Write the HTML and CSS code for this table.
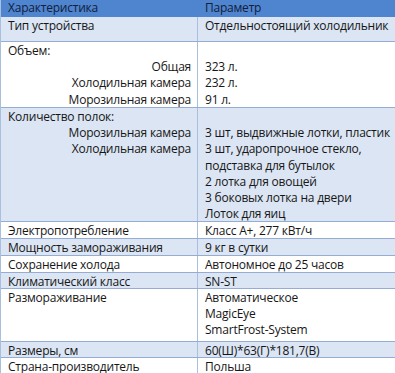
FILE: index.html
```html
<!DOCTYPE html>
<html lang="ru">
<head>
<meta charset="utf-8">
<link rel="stylesheet" href="styles.css">
</head>
<body>
<div class="table">
  <div class="row head h17">
    <div class="cell">Характеристика</div>
    <div class="cell val">Параметр</div>
  </div>
  <div class="row blue h25">
    <div class="cell">Тип устройства</div>
    <div class="cell val">Отдельностоящий холодильник</div>
  </div>
  <div class="row white h66">
    <div class="cell">
      <div class="line">Объем:</div>
      <div class="line sub">Общая</div>
      <div class="line sub">Холодильная камера</div>
      <div class="line sub">Морозильная камера</div>
    </div>
    <div class="cell val">
      <div class="line">&nbsp;</div>
      <div class="line">323 л.</div>
      <div class="line">232 л.</div>
      <div class="line">91 л.</div>
    </div>
  </div>
  <div class="row blue h114">
    <div class="cell">
      <div class="line">Количество полок:</div>
      <div class="line sub">Морозильная камера</div>
      <div class="line sub">Холодильная камера</div>
    </div>
    <div class="cell val">
      <div class="line">&nbsp;</div>
      <div class="line">3 шт, выдвижные лотки, пластик</div>
      <div class="line">3 шт, ударопрочное стекло,</div>
      <div class="line">подставка для бутылок</div>
      <div class="line">2 лотка для овощей</div>
      <div class="line">3 боковых лотка на двери</div>
      <div class="line">Лоток для яиц</div>
    </div>
  </div>
  <div class="row white h17">
    <div class="cell">Электропотребление</div>
    <div class="cell val">Класс А+, 277 кВт/ч</div>
  </div>
  <div class="row blue h17">
    <div class="cell">Мощность замораживания</div>
    <div class="cell val">9 кг в сутки</div>
  </div>
  <div class="row white h17">
    <div class="cell">Сохранение холода</div>
    <div class="cell val">Автономное до 25 часов</div>
  </div>
  <div class="row blue h16">
    <div class="cell">Климатический класс</div>
    <div class="cell val">SN-ST</div>
  </div>
  <div class="row white h53">
    <div class="cell">Размораживание</div>
    <div class="cell val">
      <div class="line">Автоматическое</div>
      <div class="line">MagicEye</div>
      <div class="line">SmartFrost-System</div>
    </div>
  </div>
  <div class="row blue h16">
    <div class="cell">Размеры, см</div>
    <div class="cell val">60(Ш)*63(Г)*181,7(В)</div>
  </div>
  <div class="row white h17">
    <div class="cell">Страна-производитель</div>
    <div class="cell val">Польша</div>
  </div>
</div>
</body>
</html>
```

FILE: styles.css
```css
html, body {
  margin: 0;
  padding: 0;
  background: #ffffff;
}
body {
  font-family: "Open Sans", "Noto Sans", sans-serif;
  font-size: 12px;
  letter-spacing: -0.22px;
  color: #161616;
  overflow: hidden;
}
.table {
  width: 398px;
  border-left: 1px solid #a9bfde;
}
.row {
  display: grid;
  grid-template-columns: 196px 1fr;
  box-sizing: border-box;
  border-bottom: 1px solid #95add3;
  line-height: 16px;
}
.cell {
  padding: 1px 6px 0 7px;
  white-space: nowrap;
  min-height: 0;
}
.line {
  height: 16.2px;
}
.val {
  border-left: 1px solid #a9bfde;
  padding-left: 7px;
}
.sub {
  text-align: right;
}
.head {
  background: #4f84cf;
  color: #10203a;
  border-bottom: none;
}
.head .cell {
  padding-top: 0;
}
.head .val {
  border-left-color: #4f84cf;
}
.blue {
  background: #dbe5f3;
}
.white {
  background: #ffffff;
}
.h16 { height: 16px; }
.h17 { height: 17px; }
.h25 { height: 25px; }
.h53 { height: 53px; }
.h66 { height: 66px; }
.h114 { height: 114px; }
```
